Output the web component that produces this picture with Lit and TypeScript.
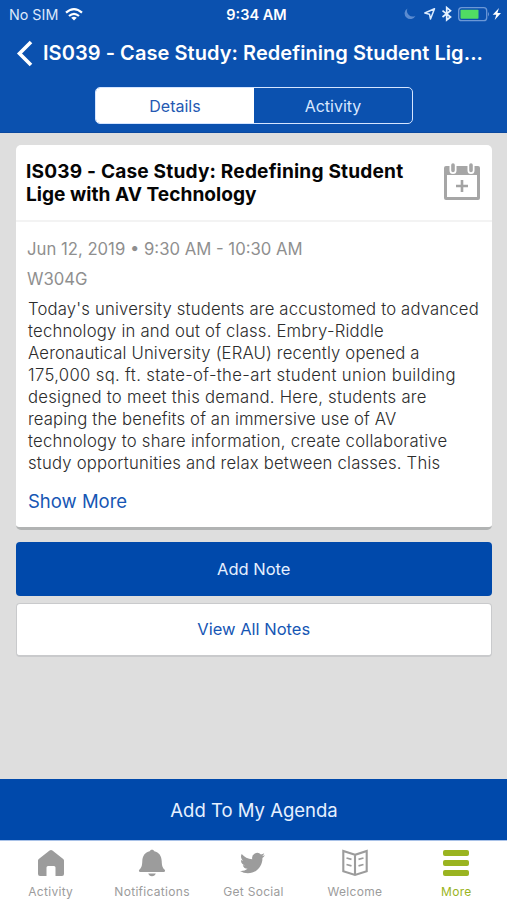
import { LitElement, html, css, svg } from "lit";
import { customElement } from "lit/decorators.js";

// Each line carries its own tracking, in pixels.
const title: [string, number][] = [
  ["IS039 - Case Study: Redefining Student", 0.18],
  ["Lige with AV Technology", 0.02],
];

const description: [string, number][] = [
  ["Today's university students are accustomed to advanced", 0.17],
  ["technology in and out of class. Embry-Riddle", 0.2],
  ["Aeronautical University (ERAU) recently opened a", 0.16],
  ["175,000 sq. ft. state-of-the-art student union building", 0.33],
  ["designed to meet this demand. Here, students are", 0.25],
  ["reaping the benefits of an immersive use of AV", 0.13],
  ["technology to share information, create collaborative", 0.23],
  ["study opportunities and relax between classes. This", 0.2],
];

const tabs = [
  {
    label: "Activity",
    icon: svg`<path d="M14 1 Q14.8 1 15.4 1.6 L26.2 10 Q27 10.7 27 11.6 V25 Q27 27 25 27 H18.500 V18.5 Q18.500 17 17 17 H11 Q9.500 17 9.500 18.5 V27 H3 Q1 27 1 25 V11.6 Q1 10.7 1.8 10 L12.6 1.6 Q13.2 1 14 1Z"/>`,
  },
  {
    label: "Notifications",
    icon: svg`<path d="M14 .8c1.200 0 2 .6 2.300 1.500C21 3.300 23.500 7 23.700 12c.2 5 .8 6.500 3 8.800.8 1 .3 2.200-1 2.200H2.300c-1.300 0-1.800-1.200-1-2.200 2.200-2.300 2.800-3.800 3-8.800C4.500 7 7 3.300 11.700 2.300 12 1.400 12.800.8 14 .8ZM10.200 24.600h7.600c-.5 1.600-1.900 2.600-3.800 2.600s-3.300-1-3.800-2.600Z"/>`,
  },
  {
    label: "Get Social",
    icon: svg`<path transform="translate(1 1.600) scale(1.040)" d="M23.953 4.57a10 10 0 01-2.825.775 4.958 4.958 0 002.163-2.723c-.951.555-2.005.959-3.127 1.184a4.920 4.920 0 00-8.384 4.482C7.690 8.095 4.067 6.130 1.640 3.162a4.822 4.822 0 00-.666 2.475c0 1.710.870 3.213 2.188 4.096a4.904 4.904 0 01-2.228-.616v.060a4.923 4.923 0 003.946 4.827 4.996 4.996 0 01-2.212.085 4.936 4.936 0 004.604 3.417 9.867 9.867 0 01-6.102 2.105c-.390 0-.779-.023-1.170-.067a13.995 13.995 0 007.557 2.209c9.053 0 13.998-7.496 13.998-13.985 0-.210 0-.420-.015-.630A9.935 9.935 0 0024 4.590z"/>`,
  },
  {
    label: "Welcome",
    icon: svg`<g fill="none" stroke="currentColor" stroke-width="2.100"><path d="M14 5.800 L2.300 2 V22.200 L14 26 L25.700 22.200 V2 Z M14 5.800 V26"/><path stroke-width="1.700" d="M5.500 9 L10.500 10.400 M5.500 15.500 L10.500 16.900 M22.500 9 L17.500 10.400 M22.500 15.500 L17.500 16.900"/></g>`,
  },
  {
    label: "More",
    icon: svg`<rect x="1" y="1" width="26" height="6" rx="2"/><rect x="1" y="11" width="26" height="6" rx="2"/><rect x="1" y="21" width="26" height="6" rx="2"/>`,
  },
];

@customElement("app-root")
export class AppRoot extends LitElement {
  static styles = css`
    :host {
      display: flex;
      flex-direction: column;
      width: 507px;
      height: 900px;
      overflow: hidden;
      background: #dedede;
      font-family: Inter, "Liberation Sans", sans-serif;
      color: #2c2c2c;
      white-space: nowrap;
    }
    * { box-sizing: border-box; }
    svg { display: block; flex: none; }
    .header { height: 133px; background: #0b51af; color: #fff; border-bottom: 1px solid #0a489f; flex: none; }
    .status { display: grid; grid-template-columns: 1fr auto 1fr; align-items: center; height: 28px; padding: 0 3px 0 9px; font-size: 14.5px; }
    .carrier { display: flex; align-items: center; gap: 7px; color: #dce8fa; font-size: 14.3px; }
    .clock { font-weight: 600; font-size: 14.5px; }
    .indicators { display: flex; justify-content: flex-end; align-items: center; }
    .nav { display: flex; align-items: center; height: 50px; padding-left: 16px; gap: 10px; }
    .nav-title { font-weight: 600; font-size: 20px; line-height: 26px; letter-spacing: 0.06px; }
    .segments { display: flex; width: 318px; height: 37px; margin: 9px 0 0 95px; border: 1.500px solid #d5e5ff; border-radius: 5px; overflow: hidden; font-size: 16px; }
    .segment { flex: 1 1 0; display: flex; align-items: center; justify-content: center; color: #d8e7ff; }
    .segment.active { background: #fff; color: #2459b2; }
    .content { flex: 1; padding: 12px 15px 0 15.500px; }
    .card { height: 385px; background: #fff; border-radius: 5px; border-bottom: 3px solid #b1b3b3; }
    .card-head { display: flex; justify-content: space-between; height: 77px; padding: 15px 11px 0 10.500px; border-bottom: 2px solid #f3f3f3; }
    .title { font-weight: 700; font-size: 19.100px; line-height: 23px; color: #050505; }
    .meta { font-size: 16.700px; line-height: 30px; color: #8f8f8f; padding: 12px 11.500px 0; }
    .description { padding: 3.500px 12.500px 0; font-size: 16.700px; font-weight: 350; line-height: 22px; }
    .show-more { padding: 14.500px 12.500px 0; font-size: 18.500px; line-height: 26px; color: #1656b4; }
    .button { display: flex; align-items: center; justify-content: center; height: 54px; border-radius: 4px; font-size: 16.500px; }
    .primary { margin-top: 12.400px; background: #0049ab; color: #e6f0ff; }
    .secondary { margin-top: 6.200px; background: #fff; border: 1px solid #c9cacc; border-bottom-width: 2px; color: #1656b4; }
    .agenda { display: flex; align-items: center; justify-content: center; height: 61px; padding: 0 0 0 1px; background: #0049ab; color: #e6f0ff; font-size: 18.500px; flex: none; }
    .tabs { display: grid; grid-template-columns: repeat(5, 1fr); height: 60px; border-top: 1px solid #a9c2e8; background: #fff; flex: none; }
    .tab { display: flex; flex-direction: column; align-items: center; padding-top: 8px; color: #9c9c9c; font-size: 12px; letter-spacing: 0.300px; line-height: 16px; gap: 7px; }
    .tab svg { fill: currentColor; }
    .tab.current { color: #9ab421; }
  `;

  render() {
    return html`
      <header class="header">
        <div class="status">
          <div class="carrier">
            <span>No SIM</span>
            <svg width="18" height="13" viewBox="0 0 18 13"><g fill="none" stroke="#fff" stroke-width="2.200"><path d="M1 4.700 Q9 -2.300 17 4.700"/><path d="M4 8 Q9 3.600 14 8"/></g><path fill="#fff" d="M6.200 9.700 Q9 7.600 11.800 9.700 L9 12.600Z"/></svg>
          </div>
          <div class="clock">9:34 AM</div>
          <div class="indicators">
            <svg width="103" height="20" viewBox="0 0 103 20">
              <path fill="#5b8bd0" d="M6.500 4.400 A5.700 5.700 0 1 0 14.500 11.700 A5.700 5.700 0 0 1 6.500 4.400Z"/>
              <path fill="none" stroke="#dcecff" stroke-width="1.500" stroke-linejoin="round" d="M33.500 4.800 L23.800 9 L28.500 10.200 L29.500 15Z"/>
              <path fill="none" stroke="#e6f2ff" stroke-width="1.700" d="M41.500 6.700 L49.500 13 L45.700 16 V3.500 L49.500 6.700 L41.500 13"/>
              <rect x="57.700" y="3.700" width="28" height="13" rx="3" fill="none" stroke="#6c98d7" stroke-width="1.300"/>
              <rect x="59.500" y="5.700" width="18" height="9" rx=".8" fill="#50dc63"/>
              <path d="M87 8 Q89 10 87 12.500Z" fill="#6c98d7"/>
              <path fill="#fff" d="M98 4 L91.700 10.800 H95.300 L93.700 16 L100 9 H96.400Z"/>
            </svg>
          </div>
        </div>
        <div class="nav">
          <svg width="17" height="27" viewBox="0 0 17 27"><path fill="none" stroke="#fff" stroke-width="3.600" d="M15 2 L3.500 13.500 L15 25"/></svg>
          <div class="nav-title">IS039 - Case Study: Redefining Student Lig...</div>
        </div>
        <div class="segments">
          <div class="segment active">Details</div>
          <div class="segment">Activity</div>
        </div>
      </header>
      <main class="content">
        <section class="card">
          <div class="card-head">
            <div class="title">
              ${title.map(([line, tracking]) => html`<div style="letter-spacing: ${tracking}px">${line}</div>`)}
            </div>
            <svg width="38" height="42" viewBox="0 0 38 42">
              <path fill="#a6a6a6" d="M3 6 H35 Q37 6 37 8 V38 Q37 40 35 40 H3 Q1 40 1 38 V8 Q1 6 3 6Z"/>
              <rect x="4" y="15" width="30" height="22" fill="#fff"/>
              <g stroke-linecap="round"><path stroke="#fff" stroke-width="7" d="M10 5.500 V10.500 M28 5.500 V10.500"/><path stroke="#a6a6a6" stroke-width="3.600" d="M10 5 V10.500 M28 5 V10.500"/></g>
              <path stroke="#a3a3a3" stroke-width="2.600" d="M19 20 V32 M13 26 H25"/>
            </svg>
          </div>
          <div class="meta">
            <div>Jun 12, 2019 • 9:30 AM - 10:30 AM</div>
            <div>W304G</div>
          </div>
          <div class="description">
            ${description.map(([line, tracking]) => html`<div style="letter-spacing: ${tracking}px">${line}</div>`)}
          </div>
          <div class="show-more">Show More</div>
        </section>
        <div class="button primary">Add Note</div>
        <div class="button secondary">View All Notes</div>
      </main>
      <div class="agenda">Add To My Agenda</div>
      <nav class="tabs">
        ${tabs.map(
          (tab) => html`<div class="tab ${tab.label === "More" ? "current" : ""}">
            <svg width="28" height="28" viewBox="0 0 28 28">${tab.icon}</svg>
            <span>${tab.label}</span>
          </div>`,
        )}
      </nav>
    `;
  }
}
